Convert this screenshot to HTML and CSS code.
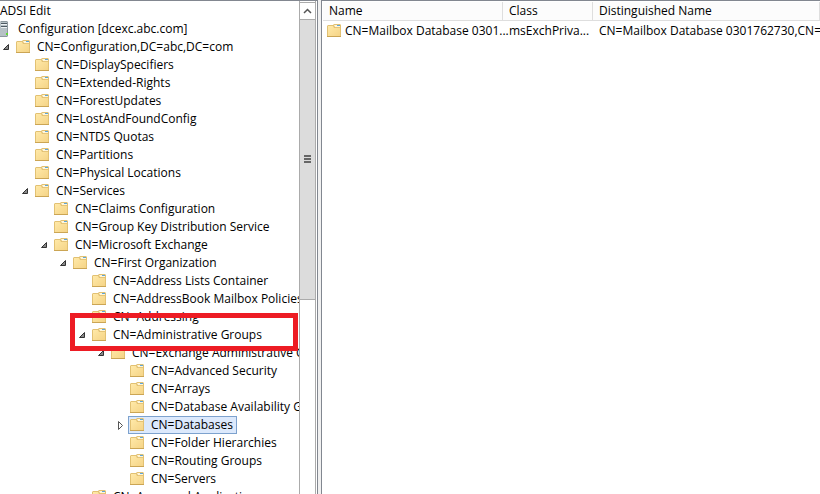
FILE: index.html
```
<!DOCTYPE html>
<html lang="en">
<head>
<meta charset="utf-8">
<title>ADSI Edit</title>
<link rel="stylesheet" href="styles.css">
</head>
<body>
<svg class="defs" aria-hidden="true">
  <defs>
    <linearGradient id="paper" x1="0" y1="0" x2="1" y2="1">
      <stop offset="0" stop-color="#ffe9a8"/>
      <stop offset="1" stop-color="#f5d487"/>
    </linearGradient>
    <symbol id="folder" viewBox="0 0 14 14">
      <path d="M0 2L1 1H6L7 0H13L14 1V13H0Z" fill="#e2c173"/>
      <path d="M1 2H6L7 4H13V12H1Z" fill="url(#paper)"/>
      <path d="M7 1H13V3H8Z" fill="#fff6da"/>
      <path d="M10 1H13V2H10Z" fill="#5da6da"/>
      <path d="M8 3H13V4H8Z" fill="#e5c478"/>
      <path d="M0 12H14V13H0Z" fill="#cba554"/>
    </symbol>
    <symbol id="server" viewBox="0 0 12 16">
      <path d="M3 1L4 0H10L11 1V15L10 16H3Z" fill="#8d989e"/>
      <path d="M3 1H10V15H3Z" fill="#b7c1c6"/>
      <path d="M4 2H10V3H4ZM4 5H10V6H4Z" fill="#4f5b63"/>
      <path d="M4 3H10V4H4ZM4 6H10V7H4Z" fill="#eef2f4"/>
      <path d="M9 12H11V14H9Z" fill="#62d936"/>
    </symbol>
    <symbol id="open" viewBox="0 0 8 8">
      <path d="M5.500 1.500V6.500H0.500Z" fill="#888" stroke="#333"/>
    </symbol>
    <symbol id="closed" viewBox="0 0 8 10">
      <path d="M1.500 1.500L5.500 5.500L1.500 9.500Z" fill="#fff" stroke="#555"/>
    </symbol>
  </defs>
</svg>
<main class="console">
  <section class="tree-pane" aria-label="Console tree">
    <div class="tree">
      <div class="row root">ADSI Edit</div>
      <ul class="top">
        <li><div class="row"><span class="toggle"></span><svg class="server"><use href="#server"/></svg><span class="label">Configuration [dcexc.abc.com]</span></div>
        <ul>
          <li><div class="row"><button class="toggle" aria-label="Collapse"><svg><use href="#open"/></svg></button><svg class="folder"><use href="#folder"/></svg><span class="label">CN=Configuration,DC=abc,DC=com</span></div>
          <ul>
            <li><div class="row"><span class="toggle"></span><svg class="folder"><use href="#folder"/></svg><span class="label">CN=DisplaySpecifiers</span></div></li>
            <li><div class="row"><span class="toggle"></span><svg class="folder"><use href="#folder"/></svg><span class="label">CN=Extended-Rights</span></div></li>
            <li><div class="row"><span class="toggle"></span><svg class="folder"><use href="#folder"/></svg><span class="label">CN=ForestUpdates</span></div></li>
            <li><div class="row"><span class="toggle"></span><svg class="folder"><use href="#folder"/></svg><span class="label">CN=LostAndFoundConfig</span></div></li>
            <li><div class="row"><span class="toggle"></span><svg class="folder"><use href="#folder"/></svg><span class="label">CN=NTDS Quotas</span></div></li>
            <li><div class="row"><span class="toggle"></span><svg class="folder"><use href="#folder"/></svg><span class="label">CN=Partitions</span></div></li>
            <li><div class="row"><span class="toggle"></span><svg class="folder"><use href="#folder"/></svg><span class="label">CN=Physical Locations</span></div></li>
            <li><div class="row"><button class="toggle" aria-label="Collapse"><svg><use href="#open"/></svg></button><svg class="folder"><use href="#folder"/></svg><span class="label">CN=Services</span></div>
            <ul>
              <li><div class="row"><span class="toggle"></span><svg class="folder"><use href="#folder"/></svg><span class="label">CN=Claims Configuration</span></div></li>
              <li><div class="row"><span class="toggle"></span><svg class="folder"><use href="#folder"/></svg><span class="label">CN=Group Key Distribution Service</span></div></li>
              <li><div class="row"><button class="toggle" aria-label="Collapse"><svg><use href="#open"/></svg></button><svg class="folder"><use href="#folder"/></svg><span class="label">CN=Microsoft Exchange</span></div>
              <ul>
                <li><div class="row"><button class="toggle" aria-label="Collapse"><svg><use href="#open"/></svg></button><svg class="folder"><use href="#folder"/></svg><span class="label">CN=First Organization</span></div>
                <ul>
                  <li><div class="row"><span class="toggle"></span><svg class="folder"><use href="#folder"/></svg><span class="label">CN=Address Lists Container</span></div></li>
                  <li><div class="row"><span class="toggle"></span><svg class="folder"><use href="#folder"/></svg><span class="label">CN=AddressBook Mailbox Policies</span></div></li>
                  <li><div class="row"><span class="toggle"></span><svg class="folder"><use href="#folder"/></svg><span class="label">CN=Addressing</span></div></li>
                  <li><div class="row marked"><button class="toggle" aria-label="Collapse"><svg><use href="#open"/></svg></button><svg class="folder"><use href="#folder"/></svg><span class="label">CN=Administrative Groups</span></div>
                  <ul>
                    <li><div class="row"><button class="toggle" aria-label="Collapse"><svg><use href="#open"/></svg></button><svg class="folder"><use href="#folder"/></svg><span class="label">CN=Exchange Administrative Group</span></div>
                    <ul>
                      <li><div class="row"><span class="toggle"></span><svg class="folder"><use href="#folder"/></svg><span class="label">CN=Advanced Security</span></div></li>
                      <li><div class="row"><span class="toggle"></span><svg class="folder"><use href="#folder"/></svg><span class="label">CN=Arrays</span></div></li>
                      <li><div class="row"><span class="toggle"></span><svg class="folder"><use href="#folder"/></svg><span class="label">CN=Database Availability Groups</span></div></li>
                      <li><div class="row"><button class="toggle" aria-label="Expand"><svg class="closed"><use href="#closed"/></svg></button><span class="selected"><svg class="folder"><use href="#folder"/></svg><span class="label">CN=Databases</span></span></div></li>
                      <li><div class="row"><span class="toggle"></span><svg class="folder"><use href="#folder"/></svg><span class="label">CN=Folder Hierarchies</span></div></li>
                      <li><div class="row"><span class="toggle"></span><svg class="folder"><use href="#folder"/></svg><span class="label">CN=Routing Groups</span></div></li>
                      <li><div class="row"><span class="toggle"></span><svg class="folder"><use href="#folder"/></svg><span class="label">CN=Servers</span></div></li>
                    </ul></li>
                  </ul></li>
                  <li><div class="row"><span class="toggle"></span><svg class="folder"><use href="#folder"/></svg><span class="label">CN=Approved Applications</span></div></li>
                </ul></li>
              </ul></li>
            </ul></li>
          </ul></li>
        </ul></li>
      </ul>
    </div>
    <div class="scrollbar">
      <button class="scroll-up" aria-label="Scroll up"><svg viewBox="0 0 9 6"><path d="M1 5L4.500 1.500L8 5" fill="none" stroke="#555" stroke-width="1.500"/></svg></button>
      <div class="track"><div class="thumb"><span class="grip"></span></div></div>
    </div>
  </section>
  <section class="list-pane" aria-label="Contents">
    <table>
      <colgroup><col class="c-name"><col class="c-class"><col></colgroup>
      <thead><tr><th>Name</th><th>Class</th><th>Distinguished Name</th></tr></thead>
      <tbody><tr><td><div class="cell"><svg class="folder"><use href="#folder"/></svg><span class="label">CN=Mailbox Database 0301...</span></div></td><td>msExchPriva...</td><td>CN=Mailbox Database 0301762730,CN=Databases</td></tr></tbody>
    </table>
  </section>
</main>
</body>
</html>
```
FILE: styles.css
```
* { box-sizing: border-box; }
body {
  margin: 0;
  background: #f0f0f0;
  color: #000;
  font: 12px/18px "Open Sans", "Noto Sans", sans-serif;
}
.defs { position: absolute; width: 0; height: 0; }
.console {
  display: grid;
  grid-template-columns: 318px 1fr;
  gap: 3px;
  height: 100vh;
  overflow: hidden;
}
.tree-pane, .list-pane {
  min-width: 0;
  min-height: 0;
  background: #fff;
  border-top: 1px solid #828790;
}
.tree-pane {
  display: flex;
  padding-right: 1px;
  border-right: 1px solid #828790;
}
.list-pane {
  padding: 1px 0 0 1px;
  border-left: 1px solid #828790;
  overflow: hidden;
}
.tree {
  flex: 1;
  min-width: 0;
  padding-top: 1px;
  overflow: hidden;
  white-space: nowrap;
}
ul { list-style: none; margin: 0 0 0 19px; padding: 0; }
.top { margin-left: -16px; }
.row { display: flex; align-items: center; height: 18px; }
.toggle {
  flex: none;
  display: flex;
  align-items: center;
  width: 13px;
  height: 18px;
  padding: 0;
  border: 0;
  background: none;
}
.toggle svg { width: 8px; height: 8px; }
.toggle .closed { height: 10px; }
.folder { flex: none; width: 14px; height: 14px; margin-right: 7px; }
.server { flex: none; width: 12px; height: 16px; margin-right: 9px; }
.selected {
  display: flex;
  align-items: center;
  height: 18px;
  margin-left: -2px;
  padding: 0 3px 0 1px;
  border: 1px solid #7da2ce;
  background: #dce9fc;
}
.marked { position: relative; }
.marked::after {
  content: "";
  position: absolute;
  inset: -13px 1px -7px -9px;
  border: 5px solid #ed1c24;
  pointer-events: none;
}
.scrollbar {
  display: flex;
  flex-direction: column;
  width: 17px;
  border: solid #ababab;
  border-width: 0 1px;
}
.scroll-up {
  display: flex;
  align-items: center;
  justify-content: center;
  height: 18px;
  padding: 0;
  margin-top: 1px;
  border: 1px solid #ababab;
  border-width: 1px 0;
  background: #fff;
}
.scroll-up svg { width: 9px; height: 6px; }
.track { flex: 1; }
.thumb {
  display: flex;
  align-items: center;
  justify-content: center;
  height: 59%;
  background: #dcdcdc;
  border-bottom: 1px solid #ababab;
}
.grip {
  width: 7px;
  height: 8px;
  background: repeating-linear-gradient(#666 0 2px, transparent 2px 3px);
}
table {
  width: 100%;
  table-layout: fixed;
  border-collapse: separate;
  border-spacing: 0;
}
.c-name { width: 180px; }
.c-class { width: 90px; }
th, td {
  height: 20px;
  padding: 0 0 0 6px;
  font-weight: 400;
  text-align: left;
  white-space: nowrap;
}
th {
  height: 19px;
  background: #fcfcfc;
  border-right: 1px solid #dedede;
  border-bottom: 1px solid #dedede;
}
td:first-child { padding-left: 4px; }
.cell { display: flex; align-items: center; }
.cell .folder { margin-right: 4px; }
```
